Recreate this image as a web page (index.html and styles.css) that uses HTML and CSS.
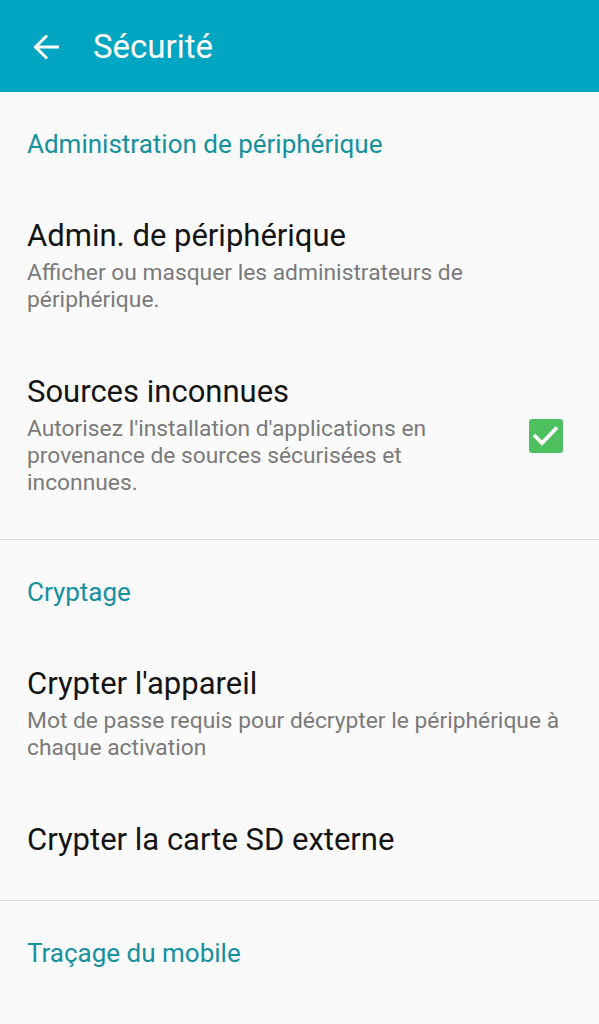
FILE: index.html
```html
<!DOCTYPE html>
<html lang="fr">
    <head>
        <meta charset="UTF-8" />
        <meta name="viewport" content="width=device-width, initial-scale=1.0" />
        <title>Sécurité</title>
        <link rel="stylesheet" href="styles.css">
    </head>
    <body>
        <div class="appbar">
            <svg class="back" width="28" height="28" viewBox="0 0 28 28">
                <path d="M26 14H3M14 2.5L2.5 14L14 25.5" fill="none" stroke="#fff" stroke-width="3" />
            </svg>
            <div class="appbar-title">Sécurité</div>
        </div>

        <!-- administration -->
        <div class="group">
            <div class="section">Administration de périphérique</div>
            <div class="item">
                <div class="item-text">
                    <div class="item-title">Admin. de périphérique</div>
                    <div class="item-sub">Afficher ou masquer les administrateurs de périphérique.</div>
                </div>
            </div>
            <div class="item">
                <div class="item-text">
                    <div class="item-title">Sources inconnues</div>
                    <div class="item-sub">Autorisez l'installation d'applications en provenance de sources sécurisées et inconnues.</div>
                </div>
                <div class="check">
                    <svg width="34" height="34" viewBox="0 0 34 34">
                        <rect x="0" y="0" width="34" height="34" rx="3" fill="#4fc05f" />
                        <path d="M5 16L13 24L28 8.5" fill="none" stroke="#fff" stroke-width="3.8" />
                    </svg>
                </div>
            </div>
        </div>

        <!-- cryptage -->
        <div class="group">
            <div class="section">Cryptage</div>
            <div class="item">
                <div class="item-text">
                    <div class="item-title">Crypter l'appareil</div>
                    <div class="item-sub">Mot de passe requis pour décrypter le périphérique à chaque activation</div>
                </div>
            </div>
            <div class="item">
                <div class="item-text">
                    <div class="item-title">Crypter la carte SD externe</div>
                </div>
            </div>
        </div>

        <div class="group last">
            <div class="section">Traçage du mobile</div>
        </div>
    </body>
</html>
```

FILE: styles.css
```css
* {
    box-sizing: border-box;
}
body {
    margin: 0;
    background: #fafafa;
    font-family: Roboto, "Noto Sans", sans-serif;
}
.appbar {
    height: 92px;
    background: #00a6c1;
    display: flex;
    align-items: center;
    padding-left: 33px;
}
.appbar .back {
    margin-top: 1px;
}
.appbar-title {
    color: #fff;
    font-size: 33px;
    margin-left: 32px;
}
.group {
    padding-bottom: 12px;
    border-bottom: 1px solid #d9d9d9;
}
.group.last {
    border-bottom: none;
}
.section {
    color: #15909f;
    font-size: 26px;
    line-height: 32px;
    padding: 36px 27px 28px;
}
.item {
    display: flex;
    align-items: center;
    padding: 31px 27px;
}
.item-text {
    flex: 1;
}
.item-title {
    color: #141414;
    font-size: 31px;
    line-height: 34px;
}
.item-sub {
    color: #7a7a7a;
    font-size: 22.8px;
    line-height: 27px;
    margin-top: 6px;
}
.check {
    margin-left: 60px;
    margin-right: 9px;
    height: 34px;
}
```
